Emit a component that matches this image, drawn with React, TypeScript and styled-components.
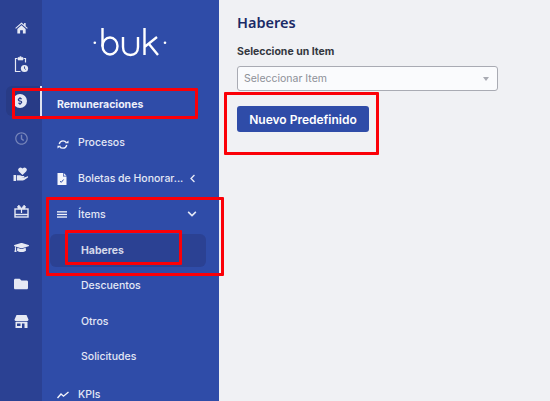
import React, { FC, ReactNode } from 'react'
import styled, { createGlobalStyle } from 'styled-components'
import {
  FaGraduationCap,
  FaFolder,
  FaChevronLeft,
  FaChevronDown,
  FaRegClock,
  FaDollarSign,
} from 'react-icons/fa'

const GlobalStyle = createGlobalStyle`
  html, body {
    margin: 0;
    padding: 0;
    height: 100%;
    overflow: hidden;
    background: #f0f1f4;
    font-family: Inter, "Liberation Sans", sans-serif;
  }
`

const Logo: FC = () => (
  <svg width="78" height="32" viewBox="0 0 78 32" fill="none" stroke="#fff" strokeWidth="2.4">
    <circle cx="2.800" cy="16.700" r="1.300" fill="#fff" stroke="none" />
    <path d="M10.500 2v18.500" />
    <ellipse cx="18" cy="20" rx="7.500" ry="8.500" />
    <path d="M31 11v10c0 5 3 8 7.500 8s7.500-3 7.500-8V11" />
    <path d="M52.500 2v27M52.500 21 65 11M57 18l9 11" />
    <circle cx="73" cy="16.700" r="1.300" fill="#fff" stroke="none" />
  </svg>
)

const HomeIcon: FC = () => (
  <svg width="13" height="12" viewBox="0 0 14 13" fill="currentColor">
    <path d="M7 0.500 0.200 6.500l.8.900L7 2.200l6 5.200.8-.900-2.300-2V1h-1.700v2L7 .500z" />
    <path d="M2.500 7.500 7 3.600l4.500 3.900V12.500H8.500V9h-3v3.500h-3z" />
  </svg>
)

const ClipboardClock: FC = () => (
  <svg width="15" height="17" viewBox="0 0 15 17" fill="none" stroke="currentColor">
    <path d="M3.500 2.500h-2v13h5M9.500 2.500h2v4" strokeWidth="1.200" />
    <path d="M4 1.500h1.500a1 1 0 0 1 2 0H9v2.500H4z" fill="currentColor" strokeWidth="0.600" />
    <circle cx="10.500" cy="12.500" r="3.600" fill="currentColor" stroke="none" />
    <path d="M10.500 10.500v2l1.300 1" stroke="#2b4193" strokeWidth="0.900" />
  </svg>
)

const MoneyIcon: FC = () => (
  <MoneyCircle>
    <FaDollarSign size={8} />
  </MoneyCircle>
)

const HandHeartIcon: FC = () => (
  <svg width="16" height="15" viewBox="0 0 16 15" fill="currentColor">
    <path d="M9.500 8 5.900 4.400a2.300 2.300 0 0 1 0-3.200 2.300 2.300 0 0 1 3.200 0l.4.400.4-.4a2.300 2.300 0 0 1 3.200 0 2.300 2.300 0 0 1 0 3.200z" />
    <rect x="0.500" y="8" width="2.500" height="6" />
    <path d="M3.800 8.300h3c.8 0 1.500.3 2 .8h2c.6 0 .9.900.1 1.200l-2.700.4 3-.3 3-1c.8-.2 1.300.6.700 1.200l-3.600 2.400c-.5.300-1 .400-1.500.400H3.800z" />
  </svg>
)

const GiftIcon: FC = () => (
  <svg width="15" height="14" viewBox="0 0 15 14" fill="none" stroke="currentColor">
    <rect x="1" y="5" width="13" height="8" strokeWidth="1.400" />
    <path d="M1 10.500h13" strokeWidth="1.400" />
    <path d="M7.500 4.500 5 1.200 3.500 2.500 4.500 5zM7.500 4.500 10 1.200l1.500 1.300-1 2.500z" fill="currentColor" strokeWidth="0.800" />
    <path d="M7.500 5v4" strokeWidth="1.200" />
  </svg>
)

const StoreIcon: FC = () => (
  <svg width="15" height="13" viewBox="0 0 15 13" fill="currentColor">
    <path d="M2.500 0h10l2 4.500c0 1.100-.9 1.700-1.800 1.700H2.300C1.400 6.200.500 5.600.500 4.500z" />
    <path d="M1.500 7h12v6h-3V8.500H8V13H1.500zM3 8.500v2.500h3.500V8.500z" />
  </svg>
)

const SyncIcon: FC = () => (
  <svg width="12" height="10" viewBox="0 -1.500 12 10" fill="none" stroke="currentColor" strokeWidth="1.300" overflow="visible">
    <path d="M2.200 4.500C2.700 2.500 4.300 1.300 6 1.300c1.500 0 2.700.7 3.400 1.900" />
    <path d="M8 3.800h3.500V1z" fill="currentColor" stroke="none" />
    <path d="M9.800 5.500C9.300 7.500 7.700 8.700 6 8.700c-1.500 0-2.700-.7-3.400-1.900" />
    <path d="M4 6.200H.500V9z" fill="currentColor" stroke="none" />
  </svg>
)

const DocIcon: FC = () => (
  <svg width="10" height="12" viewBox="0 0 10 12">
    <path d="M0.500 0H6v3.500h3.500V12H.500z" fill="#f4f5fb" />
    <path d="M6.700 0 9.500 2.800H6.700z" fill="#f4f5fb" />
    <path d="M3 8.200 4.300 9.300 6.600 6.500" fill="none" stroke="#2f4ca8" strokeWidth="1" />
  </svg>
)

const BarsIcon: FC = () => (
  <svg width="10" height="7" viewBox="0 0 10 7" fill="#f4f5fb">
    <rect x="0" y="0.200" width="10" height="1.300" />
    <rect x="0" y="2.800" width="10" height="1.300" />
    <rect x="0" y="5.400" width="10" height="1.300" />
  </svg>
)

const TrendIcon: FC = () => (
  <svg width="12" height="8" viewBox="0 0 12 8" fill="none" stroke="#f4f5fb" strokeWidth="1.400">
    <path d="M.500 7 4 3l2.500 2.200L11.500 1" />
  </svg>
)

const railItems: { key: string; icon: ReactNode; active?: boolean; dim?: boolean }[] = [
  { key: 'home', icon: <HomeIcon /> },
  { key: 'clip', icon: <ClipboardClock /> },
  { key: 'money', icon: <MoneyIcon />, active: true },
  { key: 'clock', icon: <FaRegClock size={13} />, dim: true },
  { key: 'hand', icon: <HandHeartIcon /> },
  { key: 'gift', icon: <GiftIcon /> },
  { key: 'grad', icon: <FaGraduationCap size={15} /> },
  { key: 'folder', icon: <FaFolder size={14} /> },
  { key: 'store', icon: <StoreIcon /> },
]

export default function App() {
  return (
    <Page>
      <GlobalStyle />
      <Rail>
        {railItems.map((item) => (
          <RailItem key={item.key} $active={item.active} $dim={item.dim}>
            {item.icon}
          </RailItem>
        ))}
      </Rail>

      <Sidebar>
        <LogoBox>
          <Logo />
        </LogoBox>
        <SectionTitle>Remuneraciones</SectionTitle>
        <MenuRow>
          <MenuIcon>
            <SyncIcon />
          </MenuIcon>
          <MenuLabel>Procesos</MenuLabel>
        </MenuRow>
        <MenuRow>
          <MenuIcon>
            <DocIcon />
          </MenuIcon>
          <MenuLabel>Boletas de Honorar...</MenuLabel>
          <Caret>
            <FaChevronLeft size={9} />
          </Caret>
        </MenuRow>
        <MenuRow>
          <MenuIcon>
            <BarsIcon />
          </MenuIcon>
          <MenuLabel>Ítems</MenuLabel>
          <Caret>
            <FaChevronDown size={10} />
          </Caret>
        </MenuRow>
        <SubRow $active>Haberes</SubRow>
        <SubRow>Descuentos</SubRow>
        <SubRow>Otros</SubRow>
        <SubRow>Solicitudes</SubRow>
        <MenuRow $top={2.4}>
          <MenuIcon>
            <TrendIcon />
          </MenuIcon>
          <MenuLabel>KPIs</MenuLabel>
        </MenuRow>
      </Sidebar>

      <Main>
        <Title>Haberes</Title>
        <FieldLabel>Seleccione un Item</FieldLabel>
        <SelectBox>
          <Placeholder>Seleccionar Item</Placeholder>
          <SelectArrow />
        </SelectBox>
        <PrimaryButton>Nuevo Predefinido</PrimaryButton>
      </Main>

      <Marker $x={12} $y={88} $w={186} $h={31} />
      <Marker $x={46} $y={197} $w={178} $h={79} />
      <Marker $x={65} $y={230} $w={117} $h={35} />
      <Marker $x={224} $y={92} $w={155} $h={63} />
    </Page>
  )
}

const Page = styled.div`
  position: relative;
  display: flex;
  width: 550px;
  height: 401px;
  overflow: hidden;
  background: #f0f1f4;
`

const Rail = styled.nav`
  flex: 0 0 42px;
  display: flex;
  flex-direction: column;
  padding-top: 10px;
  box-sizing: border-box;
  background: #2b4193;
`

const RailItem = styled.div<{ $active?: boolean; $dim?: boolean }>`
  flex: 0 0 36.6px;
  display: flex;
  align-items: center;
  justify-content: center;
  box-sizing: border-box;
  color: #e6e9f4;
  opacity: ${({ $dim }) => ($dim ? 0.4 : 1)};

  ${({ $active }) =>
    $active &&
    `
    margin-left: 6px;
    padding-right: 6px;
    flex-basis: 30px;
    margin-top: 3px;
    margin-bottom: 3.6px;
    border-radius: 6px 0 0 6px;
    border-right: 2px solid #dfe3f0;
    background: #283b86;
  `}
`

const MoneyCircle = styled.span`
  display: flex;
  align-items: center;
  justify-content: center;
  width: 14px;
  height: 14px;
  border-radius: 50%;
  background: #e6e9f4;
  color: #283b86;
`

const Sidebar = styled.aside`
  flex: 0 0 177px;
  display: flex;
  flex-direction: column;
  background: #2f4ca8;
  color: #e3e7f5;
`

const LogoBox = styled.div`
  flex: 0 0 87px;
  padding: 26px 0 0 50px;
  box-sizing: border-box;
`

const SectionTitle = styled.div`
  flex: 0 0 34px;
  margin-bottom: 4.2px;
  padding-left: 15px;
  display: flex;
  align-items: center;
  font-size: 10.5px;
  font-weight: 700;
  color: #eef1fb;
`

const MenuRow = styled.div<{ $top?: number }>`
  flex: 0 0 35.6px;
  margin-top: ${({ $top }) => $top ?? 0}px;
  display: flex;
  align-items: center;
  padding-left: 15px;
  font-size: 10.5px;
  font-weight: 500;
`

const MenuIcon = styled.span`
  flex: 0 0 21px;
  display: flex;
  align-items: center;
  color: #f0f2fa;
`

const MenuLabel = styled.span`
  white-space: nowrap;
`

const Caret = styled.span`
  display: flex;
  margin-left: auto;
  margin-right: 22px;
`

const SubRow = styled.div<{ $active?: boolean }>`
  flex: 0 0 ${({ $active }) => ($active ? '33px' : '35.6px')};
  margin: ${({ $active }) => ($active ? '2px 13px 1px 8px' : '0')};
  padding-left: ${({ $active }) => ($active ? '31px' : '39px')};
  display: flex;
  align-items: center;
  border-radius: 6px;
  font-size: 10.5px;
  font-weight: ${({ $active }) => ($active ? 700 : 500)};
  background: ${({ $active }) => ($active ? '#2b4193' : 'transparent')};
  color: ${({ $active }) => ($active ? '#d5d9ea' : '#e3e7f5')};
`

const Main = styled.main`
  flex: 1;
  padding: 13px 0 0 18px;
  display: flex;
  flex-direction: column;
  align-items: flex-start;
`

const Title = styled.h1`
  margin: 0 0 13px;
  font-family: "Noto Sans", Inter, sans-serif;
  font-size: 14.5px;
  line-height: 19px;
  font-weight: 600;
  color: #1a2a66;
`

const FieldLabel = styled.label`
  margin-bottom: 8px;
  font-size: 10.5px;
  line-height: 13px;
  font-weight: 700;
  color: #34373f;
`

const SelectBox = styled.div`
  flex: 0 0 25px;
  width: 261px;
  box-sizing: border-box;
  padding: 0 8px 0 6px;
  display: flex;
  align-items: center;
  justify-content: space-between;
  border: 1px solid #a9abb3;
  border-radius: 3px;
  background: #fafbfd;
`

const Placeholder = styled.span`
  font-size: 10.5px;
  color: #8d9098;
`

const SelectArrow = styled.span`
  width: 0;
  height: 0;
  border-left: 3.500px solid transparent;
  border-right: 3.500px solid transparent;
  border-top: 4px solid #a9abb3;
`

const PrimaryButton = styled.button`
  flex: 0 0 26px;
  margin-top: 15px;
  width: 132px;
  padding: 0;
  border: none;
  border-radius: 3px;
  background: #2f4ca8;
  color: #fff;
  font-family: inherit;
  font-size: 12px;
  font-weight: 600;
`

// red annotations drawn over the capture
const Marker = styled.div<{ $x: number; $y: number; $w: number; $h: number }>`
  position: absolute;
  left: ${({ $x }) => $x}px;
  top: ${({ $y }) => $y}px;
  width: ${({ $w }) => $w}px;
  height: ${({ $h }) => $h}px;
  box-sizing: border-box;
  border: 3px solid #fb0007;
  border-radius: 1px;
  pointer-events: none;
`
